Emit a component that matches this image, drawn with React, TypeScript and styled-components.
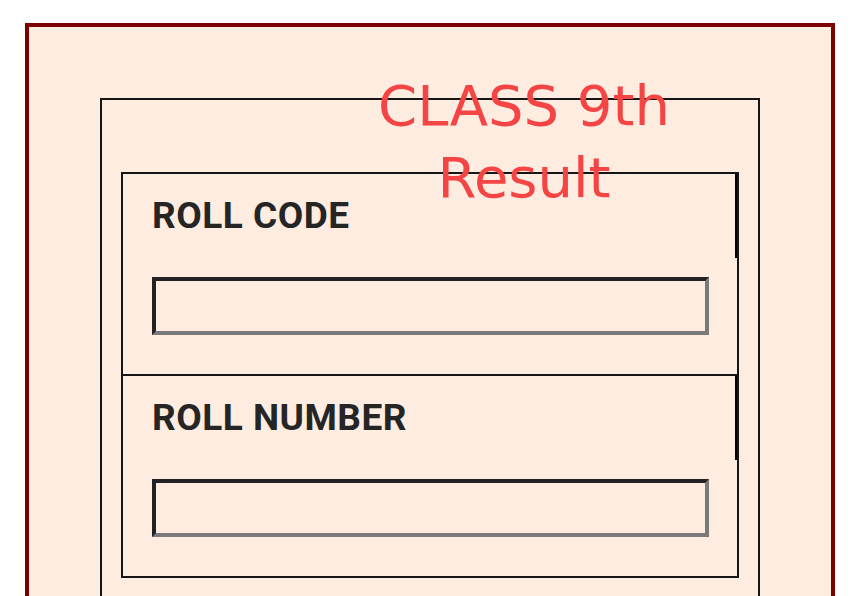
import React from 'react';
import styled, { createGlobalStyle } from 'styled-components';

const GlobalStyle = createGlobalStyle`
  * {
    box-sizing: border-box;
  }
  html, body {
    margin: 0;
    background: #ffffff;
  }
  body {
    font-family: Roboto, 'Liberation Sans', sans-serif;
  }
`;

const Page = styled.div`
  height: 596px;
  overflow: hidden;
  padding: 23px 25px 0;
`;

const OuterFrame = styled.div`
  width: 810px;
  height: 600px;
  border: 4px solid #7d0000;
  background-color: #fdecdf;
  padding: 71px 71px 0;
`;

const ResultCard = styled.div`
  position: relative;
  width: 660px;
  height: 540px;
  border: 2px solid #151515;
  padding: 72px 19px 0;
`;

const Title = styled.h1`
  position: absolute;
  top: -30px;
  left: 222px;
  width: 400px;
  margin: 0;
  z-index: 2;
  text-align: center;
  font-family: 'DejaVu Sans', Verdana, sans-serif;
  font-weight: 400;
  font-size: 56px;
  line-height: 72px;
  color: #f44444;
`;

const RollForm = styled.form`
  display: flex;
  flex-direction: column;
  width: 618px;
`;

const Field = styled.div`
  display: flex;
  flex-direction: column;
  height: 204px;
  border: 2px solid #151515;
  & + & {
    margin-top: -2px;
  }
`;

const FieldHeader = styled.div`
  height: 84px;
  padding: 20px 0 0 29px;
  border-right: 2px solid #000000;
`;

const Label = styled.label`
  display: block;
  font-size: 37px;
  line-height: 43px;
  font-weight: 700;
  letter-spacing: 0.5px;
  color: #252525;
`;

const RollInput = styled.input`
  width: 557px;
  height: 58px;
  margin: 19px 0 0 29px;
  border-style: solid;
  border-width: 4px;
  border-color: #222222 #7a7a7a #7a7a7a #222222;
  background: transparent;
  outline: none;
  font-size: 24px;
  padding: 0 8px;
`;

const fields = [
  { id: 'roll-code', label: 'ROLL CODE' },
  { id: 'roll-number', label: 'ROLL NUMBER' },
];

export default function App() {
  return (
    <Page>
      <GlobalStyle />
      <OuterFrame>
        <ResultCard>
          <Title>
            CLASS 9th
            <br />
            Result
          </Title>
          <RollForm onSubmit={(e) => e.preventDefault()}>
            {fields.map((field) => (
              <Field key={field.id}>
                <FieldHeader>
                  <Label htmlFor={field.id}>{field.label}</Label>
                </FieldHeader>
                <RollInput id={field.id} type='text' />
              </Field>
            ))}
          </RollForm>
        </ResultCard>
      </OuterFrame>
    </Page>
  );
}
